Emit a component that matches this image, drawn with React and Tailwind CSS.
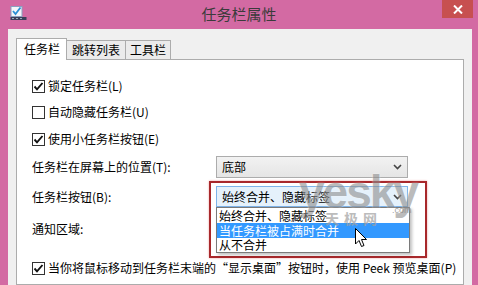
import React from "react";

function Check() {
  return (
    <svg width="11" height="11" viewBox="0 0 11 11">
      <path d="M1.5 5.5 L4 8.3 L9.5 2" fill="none" stroke="#111" strokeWidth="1.9" />
    </svg>
  );
}

function Box({ checked }) {
  return (
    <div className="w-[13px] h-[13px] border border-[#333] bg-white flex items-center justify-center mr-[3px] shrink-0">
      {checked ? <Check /> : null}
    </div>
  );
}

function Chevron() {
  return (
    <svg width="9" height="6" viewBox="0 0 9 6">
      <path d="M1 1 L4.5 4.5 L8 1" fill="none" stroke="#444" strokeWidth="1.6" />
    </svg>
  );
}

export default function App() {
  return (
    <div className="w-[478px] h-[285px] bg-[#d36aa3] flex flex-col overflow-hidden font-['Noto_Sans_CJK_SC','Microsoft_YaHei',sans-serif] text-[12px] text-black">
      {/* title bar */}
      <div className="h-[29px] grid grid-cols-[1fr_auto_1fr] shrink-0">
        <div className="flex items-start pl-[10px] pt-[6px]">
          <svg width="18" height="15" viewBox="0 0 18 15">
            <rect x="1" y="0.5" width="11" height="10" fill="#f4f6fb" stroke="#8aa0c0" />
            <path d="M3 5 L5.5 8 L10.5 1.5" fill="none" stroke="#2a8fd6" strokeWidth="1.8" />
            <rect x="0.5" y="11" width="16" height="3" fill="#3c3f5a" />
            <rect x="2" y="12" width="2" height="1" fill="#9ab" />
            <rect x="6" y="12" width="2" height="1" fill="#9ab" />
            <rect x="10" y="12" width="2" height="1" fill="#9ab" />
          </svg>
        </div>
        <div className="text-[15px] leading-[28px] text-[#3b3b3b]">任务栏属性</div>
        <div className="flex justify-end items-start pr-[5px]">
          <div className="w-[31px] h-[18px] bg-[#c75050] flex items-center justify-center">
            <svg width="10" height="9" viewBox="0 0 10 9">
              <path d="M1 0.5 L9 8.5 M9 0.5 L1 8.5" stroke="#fff" strokeWidth="2" />
            </svg>
          </div>
        </div>
      </div>

      {/* body */}
      <div className="flex-1 ml-[8px] mr-[6px] bg-[#f0f0f0] pt-[9px] pl-[8px] pr-[8px] flex flex-col">
        {/* tabs */}
        <div className="h-[21px] flex items-end shrink-0">
          <div className="w-[51px] h-[22px] bg-white border border-b-0 border-[#acacac] relative z-10 -mb-px pl-[7px] leading-[20px]">
            任务栏
          </div>
          <div className="w-[60px] h-[19px] bg-[#ebebeb] border border-b-0 border-[#acacac] -ml-px pl-[5px] leading-[18px]">
            跳转列表
          </div>
          <div className="w-[46px] h-[19px] bg-[#ebebeb] border border-b-0 border-[#acacac] -ml-px pl-[4px] leading-[18px]">
            工具栏
          </div>
        </div>

        {/* panel */}
        <div className="flex-1 bg-white border border-[#acacac] relative pl-[15px] pt-[16px] flex flex-col">
          <div className="h-[20px] flex items-center">
            <Box checked />
            <span>锁定任务栏(L)</span>
          </div>
          <div className="h-[20px] mt-[6px] flex items-center">
            <Box />
            <span>自动隐藏任务栏(U)</span>
          </div>
          <div className="h-[20px] mt-[7px] flex items-center">
            <Box checked />
            <span>使用小任务栏按钮(E)</span>
          </div>
          <div className="h-[22px] mt-[7px] flex items-center">
            <div className="w-[184px]">任务栏在屏幕上的位置(T):</div>
            <div className="w-[192px] h-[22px] border border-[#acacac] bg-gradient-to-b from-[#f2f2f2] to-[#e5e5e5] flex items-center justify-between pl-[5px] pr-[5px]">
              <span>底部</span>
              <Chevron />
            </div>
          </div>
          <div className="h-[21px] mt-[8px] flex items-center">
            <div className="w-[184px]">任务栏按钮(B):</div>
            <div className="w-[192px] h-[21px] border border-[#7eb4ea] bg-[#e5f1fb] flex items-center justify-between pl-[5px] pr-[5px]">
              <span>始终合并、隐藏标签</span>
              <Chevron />
            </div>
          </div>
          <div className="h-[22px] mt-[11px] flex items-center">
            <div className="w-[184px]">通知区域:</div>
          </div>
          <div className="h-[20px] mt-[18px] flex items-center">
            <Box checked />
            <span>当你将鼠标移动到任务栏末端的“显示桌面”按钮时，使用 Peek 预览桌面(P)</span>
          </div>

          {/* red annotation box */}
          <div className="absolute left-[192px] top-[121px] w-[218px] h-[77px] border-2 border-[#a8282b] shadow-[0_0_2px_#f0a0a0] pointer-events-none" />

          {/* dropdown list */}
          <div className="absolute left-[199px] top-[147px] w-[194px] bg-white border border-[#7a7a7a] shadow-[2px_2px_3px_rgba(0,0,0,0.25)] flex flex-col">
            <div className="h-[15px] leading-[15px] pl-[2px]">始终合并、隐藏标签</div>
            <div className="h-[15px] leading-[15px] pl-[2px] bg-[#3399ff] text-white">当任务栏被占满时合并</div>
            <div className="h-[14px] leading-[14px] pl-[2px]">从不合并</div>
          </div>

          {/* watermark */}
          <div className="absolute left-[282px] top-[107px] text-[46px] leading-[50px] font-bold font-['Liberation_Sans',sans-serif] text-[#8e8e8e] opacity-60 tracking-[-2px] [text-shadow:0_0_2px_#fff] pointer-events-none">
            yesky
          </div>
          <div className="absolute left-[375px] top-[146px] text-[9px] leading-[9px] font-['Liberation_Sans',sans-serif] text-[#8a8a8a] opacity-80 pointer-events-none">
            .com
          </div>
          <div className="absolute left-[308px] top-[151px] text-[14px] leading-[14px] font-bold text-[#a0a0a0] opacity-70 tracking-[5px] pointer-events-none">
            天极网
          </div>

          {/* cursor */}
          <svg className="absolute left-[338px] top-[168px] pointer-events-none" width="13" height="20" viewBox="0 0 13 20">
            <path d="M0.5 0.5 L0.5 16 L4 12.5 L6.5 18.5 L9 17.5 L6.5 11.5 L11.5 11.5 Z" fill="#fff" stroke="#000" strokeWidth="1" strokeLinejoin="round" />
          </svg>
        </div>
      </div>
    </div>
  );
}
